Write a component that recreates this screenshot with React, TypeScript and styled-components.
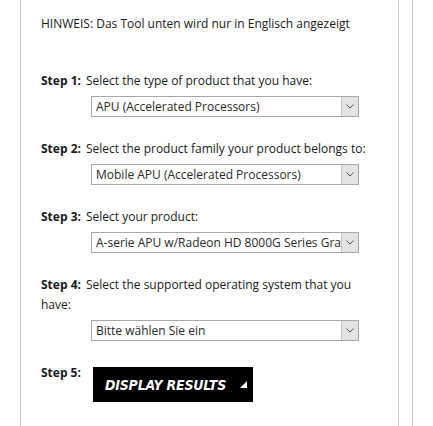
import styled, { createGlobalStyle } from "styled-components";

const LINE = "#c9c9c9";
const FIELD_BORDER = "#a8a8a8";

const GlobalStyle = createGlobalStyle`
  body {
    margin: 0;
    background: #ffffff;
    font-family: "Open Sans", "Noto Sans", sans-serif;
    color: #1a1a1a;
  }
`;

const Page = styled.div`
  width: 413px;
  min-height: 100vh;
  box-sizing: border-box;
  border-right: 1px solid ${LINE};
`;

const Panel = styled.div`
  margin-left: 20px;
  width: 379px;
  min-height: 100vh;
  box-sizing: border-box;
  border-left: 1px solid ${LINE};
  border-right: 1px solid ${LINE};
  padding: 14px 19px 0 20px;
  font-size: 12px;
  line-height: 20px;
`;

const Notice = styled.div`
  margin-bottom: 37px;
`;

const StepBlock = styled.div`
  margin-bottom: 22px;
`;

const Label = styled.b`
  font-weight: 700;
  margin-right: 5px;
`;

const Field = styled.div`
  margin: 5px 0 0 50px;
  width: 268px;
  height: 21px;
  box-sizing: border-box;
  border: 1px solid ${FIELD_BORDER};
  display: flex;
  background: #fff;
`;

const FieldText = styled.span`
  flex: 1;
  padding-left: 4px;
  overflow: hidden;
  white-space: nowrap;
  line-height: 19px;
  color: #2a2a2a;
`;

const ArrowBox = styled.span`
  width: 16px;
  background: #e3e3e3;
  border-left: 1px solid #c4c4c4;
  display: flex;
  align-items: center;
  justify-content: center;
`;

const LastRow = styled.div`
  display: grid;
  grid-template-columns: 52px auto;
  align-items: start;
`;

const ResultButton = styled.button`
  margin-top: 4px;
  width: 160px;
  height: 35px;
  background: #000;
  color: #fff;
  border: none;
  padding: 0 0 0 12px;
  display: flex;
  align-items: center;
  gap: 14px;
  font-family: "DejaVu Sans Condensed", "DejaVu Sans", sans-serif;
  font-weight: 700;
  font-style: italic;
  font-size: 14px;
  letter-spacing: -0.2px;
  cursor: pointer;
`;

const Select = ({ value }: { value: string }) => (
  <Field>
    <FieldText>{value}</FieldText>
    <ArrowBox>
      <svg width="8" height="5" viewBox="0 0 8 5">
        <path d="M0.5 0.5 L4 4 L7.5 0.5" fill="none" stroke="#555" strokeWidth="1" />
      </svg>
    </ArrowBox>
  </Field>
);

const steps = [
  { n: 1, text: "Select the type of product that you have:", value: "APU (Accelerated Processors)" },
  { n: 2, text: "Select the product family your product belongs to:", value: "Mobile APU (Accelerated Processors)" },
  { n: 3, text: "Select your product:", value: "A-serie APU w/Radeon HD 8000G Series Graphics" },
  { n: 4, text: "Select the supported operating system that you have:", value: "Bitte wählen Sie ein" },
];

const App = () => (
  <>
    <GlobalStyle />
    <Page>
      <Panel>
        <Notice>HINWEIS: Das Tool unten wird nur in Englisch angezeigt</Notice>
        {steps.map((s) => (
          <StepBlock key={s.n}>
            <div>
              <Label>Step {s.n}:</Label>
              {s.text}
            </div>
            <Select value={s.value} />
          </StepBlock>
        ))}
        <LastRow>
          <Label>Step 5:</Label>
          <ResultButton>
            DISPLAY RESULTS
            <svg width="7" height="7" viewBox="0 0 7 7">
              <path d="M7 0 L7 7 L0 7 Z" fill="#fff" />
            </svg>
          </ResultButton>
        </LastRow>
      </Panel>
    </Page>
  </>
);

export default App;
